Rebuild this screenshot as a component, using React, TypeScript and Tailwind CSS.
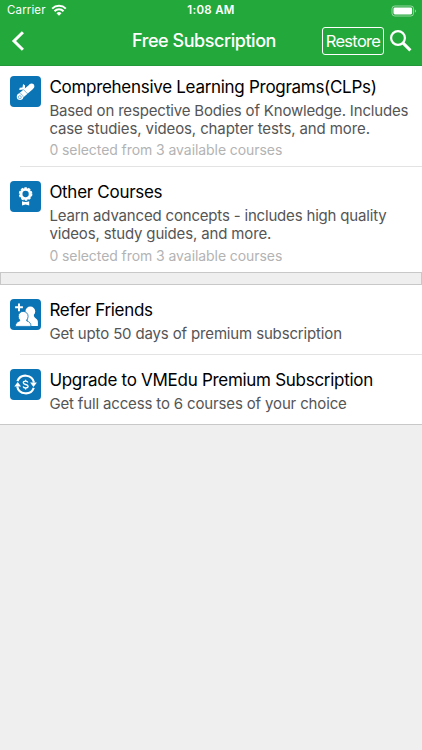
import type { ReactNode } from "react";

type RowProps = {
  icon: ReactNode;
  title: string;
  children: ReactNode;
  className: string;
};

const DiplomaIcon = () => (
  <svg viewBox="0 0 31 31" className="w-full h-full" fill="none">
    <path d="M10.2 20.2 21.4 10.6" stroke="white" strokeWidth="5.8" />
    <circle cx="10" cy="20.8" r="3.2" fill="white" />
    <circle cx="21.6" cy="10.2" r="2.7" fill="white" />
    <circle cx="9.8" cy="21.2" r="1.5" stroke="#0a74b5" strokeWidth="0.5" />
    <path d="M9.6 17.6c1.8 0 3.2 1.4 3.6 3.2M13.6 13.8l4.2 4.2" stroke="#0a74b5" strokeWidth="0.5" />
    <path d="M13.4 13.4 9.2 14l.5-2.3 2.8-.2.6-3.4 2 1.4-.2 3.2z" fill="white" />
  </svg>
);

const RibbonIcon = () => (
  <svg viewBox="0 0 31 31" className="w-full h-full" fill="none">
    <circle cx="15.6" cy="13" r="4.6" stroke="white" strokeWidth="2.9" />
    <circle cx="15.6" cy="13" r="6" stroke="white" strokeWidth="1.6" strokeDasharray="2.4 1.37" />
    <path d="M12 20.2c2.2.9 5 .9 7.2 0v4.4l-3.6-1-3.6 1z" fill="white" />
  </svg>
);

const FriendsIcon = () => (
  <svg viewBox="0 0 31 31" className="w-full h-full" fill="none">
    <path d="M9 4.4v7.8M5.1 8.3h7.8" stroke="white" strokeWidth="2" />
    <circle cx="20.3" cy="12.4" r="4.9" fill="white" />
    <path d="M17.5 14h6.2c0 3 .4 4.4 2.2 5.4 1.4.8 2 1.8 2 3.6v4H17.5z" fill="white" />
    <path
      d="M13.2 12.4a4.9 4.9 0 0 1 4.9 4.9c0 1.6-.6 2.8-1.4 3.7v.9c2.8.8 4.3 2.4 4.3 5.5H5.4c0-3.1 1.5-4.7 4.3-5.5V21c-.8-.9-1.4-2.1-1.4-3.7a4.9 4.9 0 0 1 4.9-4.9z"
      fill="white"
      stroke="#0a74b5"
      strokeWidth="0.8"
    />
  </svg>
);

const RenewIcon = () => (
  <svg viewBox="0 0 31 31" className="w-full h-full" fill="none">
    <path d="M7.4 12.2a8.7 8.7 0 0 1 16.6 1.3M23.8 18.8a8.7 8.7 0 0 1-16.6-1.3" stroke="white" strokeWidth="2.1" />
    <path d="M20.1 13.6h6.8l-3.4 4.3zM4.3 17.4h6.8l-3.4-4.3z" fill="white" />
    <path
      d="M17.9 13.5c-.4-.9-1.2-1.3-2.3-1.3-1.3 0-2.3.6-2.3 1.6 0 2.2 4.8 1.2 4.8 3.5 0 1.1-1 1.7-2.5 1.7-1.3 0-2.2-.5-2.5-1.5M15.6 10.8v1.6M15.6 18.8v1.6"
      stroke="white"
      strokeWidth="1.3"
    />
  </svg>
);

const StatusBar = () => (
  <div className="grid grid-cols-3 items-center h-[22px] pl-[7px] pr-[5px] text-[11.5px]">
    <div className="flex items-center gap-[5px]">
      <span className="tracking-[0.14px]">Carrier</span>
      <svg viewBox="0 0 16 12" className="w-4 h-3 -mt-[2px]" fill="none">
        <path d="M1.2 4.6a9.7 9.7 0 0 1 13.6 0M3.5 7.2a6.4 6.4 0 0 1 9 0" stroke="white" strokeWidth="2" />
        <path d="M5.5 9.2a3.6 3.6 0 0 1 5 0L8 11.7z" fill="white" />
      </svg>
    </div>
    <span className="text-center font-semibold tracking-[0.3px] -ml-[2px]">1:08 AM</span>
    <svg viewBox="0 0 26 12" className="w-[26px] h-3 justify-self-end -mt-px" fill="none">
      <rect x="1" y="1" width="21.6" height="10" rx="2.8" stroke="white" strokeOpacity="0.5" />
      <rect x="2.5" y="2.5" width="18.6" height="7" rx="1.4" fill="white" />
      <path d="M24 4.4c1.3.5 1.3 2.7 0 3.2z" fill="white" fillOpacity="0.55" />
    </svg>
  </div>
);

const NavBar = () => (
  <div className="grid grid-cols-[110px_1fr_110px] items-center h-[38px]">
    <button aria-label="Back" className="pl-[11px]">
      <svg viewBox="0 0 14 20" className="w-3.5 h-5" fill="none">
        <path d="M11.9 1.2 3 10l8.9 8.8" stroke="white" strokeWidth="3" />
      </svg>
    </button>
    <h1 className="text-center text-[18px] font-medium tracking-[-0.45px] whitespace-nowrap -ml-[14px] -mt-px">
      Free Subscription
    </h1>
    <div className="flex items-center gap-[5px]">
      <button className="w-[62px] h-[28px] ml-[10px] border border-white rounded-[3px] text-[16.5px] leading-[25px] tracking-[-0.7px] shrink-0">
        Restore
      </button>
      <svg viewBox="0 0 24 24" className="w-6 h-6 shrink-0 -mt-px" fill="none">
        <circle cx="9" cy="9" r="6.9" stroke="white" strokeWidth="2.2" />
        <path d="m13.9 13.9 7.5 7.5" stroke="white" strokeWidth="3" />
      </svg>
    </div>
  </div>
);

const Row = ({ icon, title, children, className }: RowProps) => (
  <li className={`flex pl-[10.4px] ${className}`}>
    <div className="w-[31px] h-[31px] rounded-[4px] bg-[#0a74b5] shrink-0">{icon}</div>
    <div className="pl-[8px] whitespace-nowrap">
      <h2 className="-mt-px text-[17px] leading-6 tracking-[-0.29px] text-black">{title}</h2>
      {children}
    </div>
  </li>
);

const Description = ({ children }: { children: ReactNode }) => (
  <p className="text-[15px] leading-[18px] tracking-[-0.15px] text-[#555] pt-[3px]">{children}</p>
);

const Selected = () => (
  <p className="text-[14px] leading-[18px] tracking-[-0.07px] text-[#b3b3b3] pt-[3.5px]">
    0 selected from 3 available courses
  </p>
);

const Divider = () => <li className="h-px ml-5 bg-[#e3e3e3]" />;

export default function App() {
  return (
    <div className="h-[750px] w-full overflow-hidden bg-[#efefef] font-['Inter',sans-serif]">
      <header className="h-[66px] bg-[#23a93b] border-b border-[#23983a] text-white">
        <StatusBar />
        <NavBar />
      </header>

      {/* Courses */}
      <ul className="bg-white h-[206px]">
        <Row className="h-[100px] pt-[9.6px]" icon={<DiplomaIcon />} title="Comprehensive Learning Programs(CLPs)">
          <Description>
            <span className="tracking-[-0.18px]">Based on respective Bodies of Knowledge. Includes</span>
            <br />
            <span className="tracking-[-0.11px]">case studies, videos, chapter tests, and more.</span>
          </Description>
          <Selected />
        </Row>
        <Divider />
        <Row className="h-[105px] pt-[14px]" icon={<RibbonIcon />} title="Other Courses">
          <Description>
            <span className="tracking-[-0.18px]">Learn advanced concepts - includes high quality</span>
            <br />
            videos, study guides, and more.
          </Description>
          <Selected />
        </Row>
      </ul>

      <div className="h-[13px] border border-[#c8c8c8] bg-[#efefef]" />

      {/* Account */}
      <ul className="bg-white h-[140px] border-b border-[#c8c8c8]">
        <Row className="h-[69px] pt-[14px]" icon={<FriendsIcon />} title="Refer Friends">
          <Description>Get upto 50 days of premium subscription</Description>
        </Row>
        <Divider />
        <Row className="h-[69px] pt-[14px]" icon={<RenewIcon />} title="Upgrade to VMEdu Premium Subscription">
          <Description>Get full access to 6 courses of your choice</Description>
        </Row>
      </ul>
    </div>
  );
}
